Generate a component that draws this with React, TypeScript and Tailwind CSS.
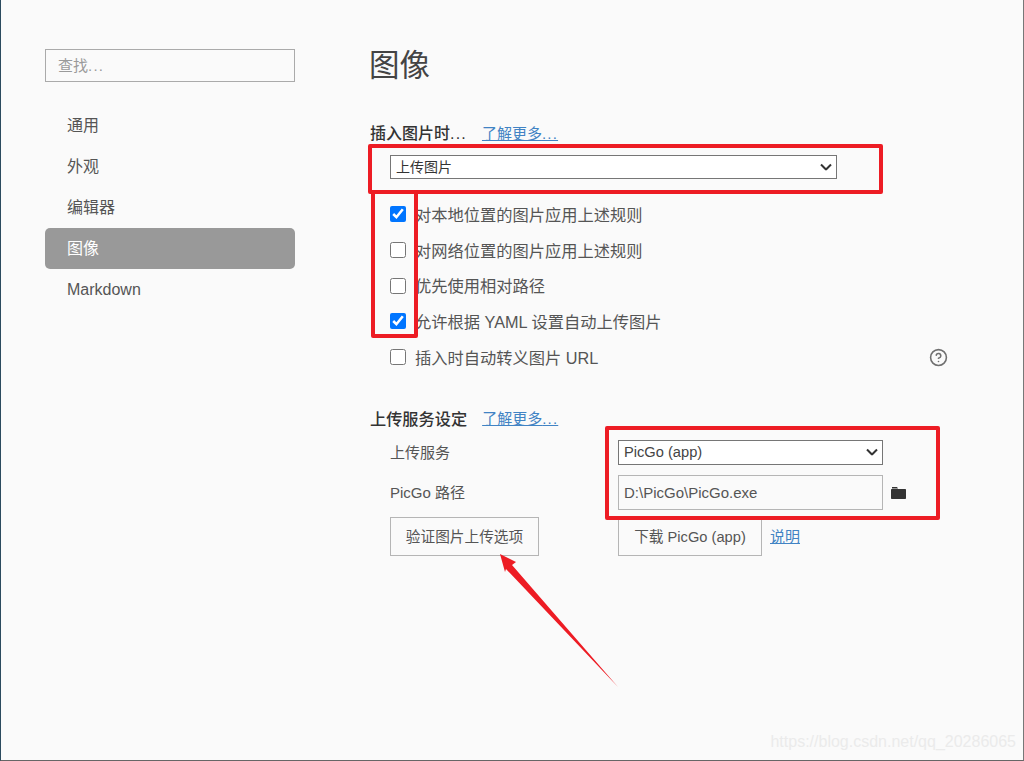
import { CircleHelp } from "lucide-react";

const navItems = ["通用", "外观", "编辑器", "图像", "Markdown"];

const checkboxes = [
  { label: "对本地位置的图片应用上述规则", checked: true },
  { label: "对网络位置的图片应用上述规则", checked: false },
  { label: "优先使用相对路径", checked: false },
  { label: "允许根据 YAML 设置自动上传图片", checked: true },
  { label: "插入时自动转义图片 URL", checked: false, help: true },
];

const Dots = () => <span className="tracking-[1.2px]">...</span>;

const LearnMore = ({ className = "" }: { className?: string }) => (
  <a href="#" className={`ml-[15px] text-[15px] text-[#4183c4] underline ${className}`}>
    了解更多
    <Dots />
  </a>
);

const Chevron = () => (
  <svg
    viewBox="0 0 12 7"
    className="absolute right-[5px] top-1/2 -translate-y-1/2 w-[12px] h-[7px] pointer-events-none text-[#333333]"
    fill="none"
    stroke="currentColor"
    strokeWidth="2"
  >
    <path d="M1 1l5 5 5-5" />
  </svg>
);

const App = () => {
  return (
    <div className="relative flex w-[1024px] h-[761px] overflow-hidden bg-[#fafafa] border-l border-l-[#2b4a5e] border-r border-r-[#777777] border-b border-b-[#666666] font-['Liberation_Sans','Noto_Sans_CJK_SC',sans-serif] text-[#555555]">
      {/* sidebar */}
      <aside className="w-[369px] shrink-0 pl-[44px] pt-[49px]">
        <div className="flex items-center w-[250px] h-[33px] px-3 pt-[1px] border border-[#aaaaaa] bg-[#fafafa] text-[15px] text-[#9a9a9a]">
          查找
          <Dots />
        </div>
        <ul className="w-[250px] mt-[24px]">
          {navItems.map((item) => (
            <li
              key={item}
              className={`flex items-center h-[40.75px] pl-[22px] text-[16px] rounded-[5px] ${
                item === "图像" ? "bg-[#999999] text-white" : "text-[#555555]"
              } ${item === "Markdown" ? "pt-[2px]" : ""}`}
            >
              {item}
            </li>
          ))}
        </ul>
      </aside>

      {/* main */}
      <main className="flex-1 pt-[44px]">
        <h1 className="h-[42px] -ml-[1px] text-[30.5px] leading-[42px] font-normal text-[#444444]">图像</h1>

        <div className="flex items-center h-[24px] mt-[36px]">
          <span className="text-[16px] font-medium text-[#333333]">
            插入图片时
            <Dots />
          </span>
          <LearnMore />
        </div>
        <div className="pl-[20px]">
          <div className="relative w-[447px] h-[24px] mt-[9px]">
            <select className="block w-full h-full pl-[5px] pt-[1px] appearance-none bg-white border border-[#767676] text-[14px] text-[#333333]">
              <option>上传图片</option>
            </select>
            <Chevron />
          </div>
          <div className="w-[558px] mt-[17.25px]">
            {checkboxes.map((row) => (
              <div key={row.label} className="flex items-center justify-between h-[35.75px]">
                <label className="flex items-center gap-[9px] text-[16.25px] text-[#555555]">
                  <input type="checkbox" defaultChecked={row.checked} className="w-4 h-4" />
                  <span className="pt-[2px]">{row.label}</span>
                </label>
                {row.help && <CircleHelp size={19} strokeWidth={2} className="text-[#707070]" />}
              </div>
            ))}
          </div>
        </div>

        <div className="flex items-center h-[24px] mt-[30.75px]">
          <span className="pt-[2px] text-[16.2px] font-medium text-[#333333]">上传服务设定</span>
          <LearnMore className="pt-[2px]" />
        </div>
        <div className="grid grid-cols-[228px_1fr] pl-[20px] mt-[10px] text-[15px] text-[#555555]">
          <div className="flex items-center h-[25px] pt-[2px]">上传服务</div>
          <div className="relative w-[265px] h-[25px]">
            <select className="block w-full h-full pl-[5px] appearance-none bg-white border border-[#767676] text-[14.67px] text-[#444444]">
              <option>PicGo (app)</option>
            </select>
            <Chevron />
          </div>

          <div className="flex items-center h-[35px] mt-[10px] pt-[2px]">PicGo 路径</div>
          <div className="flex items-center mt-[10px]">
            <div className="flex items-center w-[265px] h-[35px] px-[5px] pt-[1px] border border-[#b5b5b5] text-[15px] text-[#555555]">
              D:\PicGo\PicGo.exe
            </div>
            <svg viewBox="0 0 15 12" className="w-[15px] h-[12px] ml-[8px] mt-[1px] text-[#333333]" fill="currentColor">
              <path d="M1 0h5l1 1.5H1z" />
              <path d="M0 3C0 2.4.4 2 1 2h13c.6 0 1 .4 1 1v8c0 .6-.4 1-1 1H1c-.6 0-1-.4-1-1z" />
            </svg>
          </div>

          <div className="mt-[7px]">
            <button className="w-[149px] h-[39px] pt-[1px] border border-[#b5b5b5] text-[14.67px] text-[#555555]">
              验证图片上传选项
            </button>
          </div>
          <div className="flex items-center mt-[7px]">
            <button className="w-[144px] h-[39px] pt-[1px] border border-[#b5b5b5] text-[14.67px] text-[#555555]">
              下载 PicGo (app)
            </button>
            <a href="#" className="ml-[8px] pt-[1px] text-[#4183c4] underline">
              说明
            </a>
          </div>
        </div>
      </main>

      {/* annotations drawn over the screenshot */}
      <div className="absolute left-[367px] top-[144px] w-[515px] h-[50px] border-[4px] border-[#ed1c24] rounded-[2px]" />
      <div className="absolute left-[370px] top-[190px] w-[47px] h-[148px] border-[4px] border-[#ed1c24] rounded-[2px]" />
      <div className="absolute left-[604px] top-[426px] w-[335px] h-[94px] border-[4px] border-[#ed1c24] rounded-[2px]" />
      <svg className="absolute left-[-1px] top-0 w-[1024px] h-[761px] pointer-events-none" viewBox="0 0 1024 761">
        <polygon points="500,554 516,562 512,565 618,687 506,569 505,572" fill="#ed1c24" />
      </svg>

      <span className="absolute right-[7px] top-[732px] text-[16px] leading-[20px] text-[#ebebeb]">
        https://blog.csdn.net/qq_20286065
      </span>
    </div>
  );
};

export default App;
